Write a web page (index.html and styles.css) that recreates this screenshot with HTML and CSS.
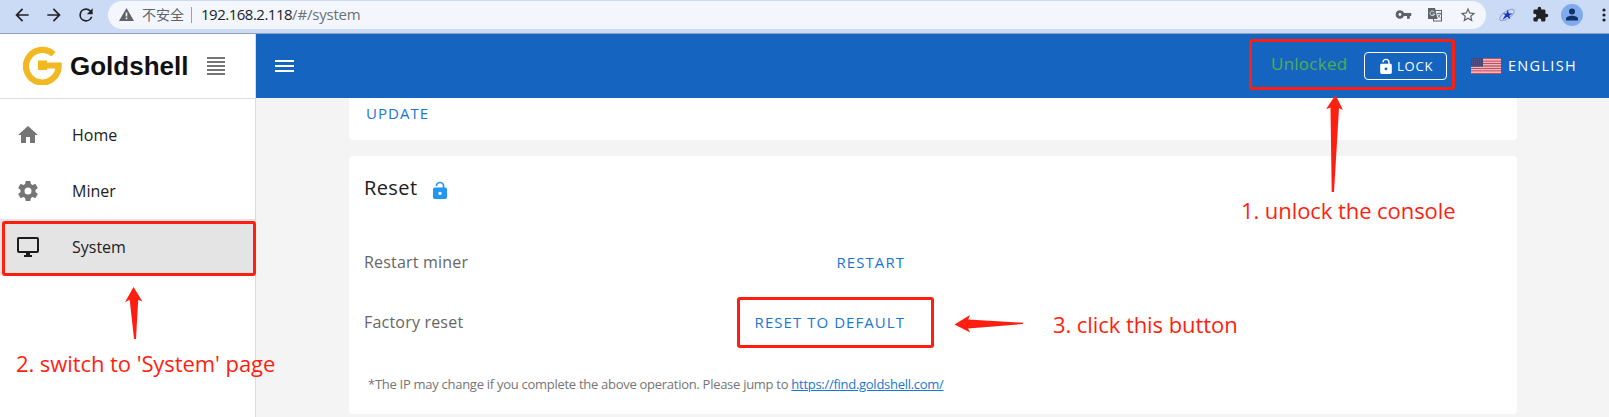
FILE: index.html
```html
<!DOCTYPE html>
<html lang="en">
<head>
<meta charset="utf-8">
<title>Goldshell</title>
<link rel="stylesheet" href="styles.css">
</head>
<body>
<div class="browser-bar">
  <svg class="nav-icon" viewBox="0 0 24 24"><path d="M20 11H7.800l5.600-5.600L12 4l-8 8 8 8 1.400-1.400L7.800 13H20z"/></svg>
  <svg class="nav-icon" viewBox="0 0 24 24"><path d="M12 4l-1.400 1.400L16.200 11H4v2h12.200l-5.600 5.600L12 20l8-8z"/></svg>
  <svg class="nav-icon" viewBox="0 0 24 24"><path d="M17.650 6.350A7.960 7.960 0 0 0 12 4a8 8 0 1 0 7.730 10h-2.080A6 6 0 1 1 12 6c1.660 0 3.140.69 4.220 1.780L13 11h7V4z"/></svg>
  <div class="omnibox">
    <svg class="warn" viewBox="0 0 15 13"><path d="M7.500 0L15 13H0z" fill="#5f6368"/><path d="M6.700 4.500h1.600v4H6.700zM6.700 9.600h1.600v1.600H6.700z" fill="#f3f7fd"/></svg>
    <span class="insecure">不安全</span>
    <span class="sep"></span>
    <span class="url">192.168.2.118<span class="path">/#/system</span></span>
    <div class="omni-icons">
      <svg width="17" height="17" viewBox="0 0 24 24"><path fill="#5f6368" d="M12.650 10A6 6 0 0 0 7 6a6 6 0 1 0 5.650 8H17v4h4v-4h2v-4H12.650zM7 14a2 2 0 1 1 0-4 2 2 0 0 1 0 4z"/></svg>
      <svg width="16" height="16" viewBox="0 0 16 16"><rect x="6.500" y="3.500" width="8" height="10.500" fill="#f3f7fd" stroke="#5f6368"/><path d="M1 1h7l2.500 11H1z" fill="#5f6368"/><path d="M7.400 5.200A2.300 2.300 0 1 0 7.600 7H5.600" stroke="#e8eef8" fill="none"/><path d="M10 6.500h4M12 5.500v1M13.300 6.500c-.3 2-1.500 3.500-3 4.300M10.600 7.500c.6 1.500 1.800 2.800 3 3.500" stroke="#5f6368" stroke-width=".8" fill="none"/></svg>
      <svg width="18" height="18" viewBox="0 0 24 24"><path fill="#5f6368" d="M22 9.240l-7.190-.62L12 2 9.190 8.630 2 9.240l5.460 4.730L5.820 21 12 17.270 18.180 21l-1.630-7.030zM12 15.400l-3.760 2.270 1-4.280-3.320-2.880 4.380-.38L12 6.100l1.710 4.040 4.380.38-3.320 2.880 1 4.280z"/></svg>
    </div>
  </div>
  <svg class="ext" width="16" height="16" viewBox="0 0 16 16"><ellipse cx="8" cy="8" rx="8.500" ry="3.600" transform="rotate(-35 8 8)" fill="none" stroke="#8fa2dc"/><path fill="#1535b8" d="M8.800 2.600l1 3.800 4 .1-3.500 2 1 3.700-3-2.400-5 3.300 3-5.100-2.600-1.500 3.800-.1z"/></svg>
  <svg class="puzzle" width="17" height="17" viewBox="0 0 24 24"><path fill="#202124" d="M20.500 11H19V7a2 2 0 0 0-2-2h-4V3.500a2.500 2.500 0 0 0-5 0V5H4a2 2 0 0 0-2 2v3.800h1.500a2.700 2.700 0 0 1 0 5.400H2V20a2 2 0 0 0 2 2h3.800v-1.500a2.700 2.700 0 0 1 5.400 0V22H17a2 2 0 0 0 2-2v-4h1.500a2.500 2.500 0 0 0 0-5z"/></svg>
  <svg class="avatar" width="22" height="22" viewBox="0 0 22 22"><circle cx="11" cy="11" r="11" fill="#7faaec"/><circle cx="11" cy="7.500" r="3" fill="#123168"/><path d="M5 16.500v-1.700c0-4 12-4 12 0v1.700z" fill="#123168"/></svg>
  <svg class="dots" width="4" height="14" viewBox="0 0 4 14"><circle cx="2" cy="2" r="1.600"/><circle cx="2" cy="7" r="1.600"/><circle cx="2" cy="12" r="1.600"/></svg>
</div>

<div class="app">
  <aside class="sidebar">
    <div class="brand">
      <svg class="logo" width="39" height="39" viewBox="0 0 39 39"><path d="M30.500 8.300A16.300 16.300 0 1 0 35.600 19.500H16" fill="none" stroke="#f2b822" stroke-width="6.200"/><path d="M15 14.500h9v9.500H15z" fill="#f2b822"/></svg>
      <span class="brand-name">Goldshell</span>
      <svg class="justify" width="18" height="18" viewBox="0 0 18 18"><path fill="#757575" d="M0 0h18v2H0zM0 4h18v2H0zM0 8h18v2H0zM0 12h18v2H0zM0 16h18v2H0z"/></svg>
    </div>
    <nav class="menu">
      <a class="item"><svg class="item-icon" viewBox="0 0 24 24"><path d="M10 20v-6h4v6h5v-8h3L12 3 2 12h3v8z"/></svg><span>Home</span></a>
      <a class="item"><svg class="item-icon" viewBox="0 0 24 24"><path d="M12 15.500A3.500 3.500 0 0 1 8.500 12 3.500 3.500 0 0 1 12 8.500a3.500 3.500 0 0 1 3.500 3.500 3.500 3.500 0 0 1-3.500 3.500m7.430-2.530c.04-.32.070-.64.070-.97s-.03-.66-.07-1l2.110-1.630c.19-.15.240-.42.120-.64l-2-3.460c-.12-.22-.39-.31-.61-.22l-2.490 1c-.52-.39-1.060-.73-1.690-.98l-.37-2.650A.506.506 0 0 0 14 2h-4c-.25 0-.46.180-.5.420l-.37 2.650c-.63.250-1.170.590-1.690.980l-2.490-1c-.22-.09-.49 0-.61.220l-2 3.460c-.13.220-.07.490.12.640L4.570 11c-.04.340-.07.670-.07 1s.03.650.07.970l-2.110 1.660c-.19.150-.25.420-.12.640l2 3.460c.12.220.39.300.61.220l2.490-1.010c.52.400 1.060.74 1.690.99l.37 2.650c.04.240.25.420.5.420h4c.25 0 .46-.18.500-.42l.37-2.650c.63-.26 1.170-.59 1.690-.99l2.490 1.010c.22.080.49 0 .61-.22l2-3.460c.12-.22.070-.49-.12-.64z"/></svg><span>Miner</span></a>
      <a class="item active"><svg class="item-icon" viewBox="0 0 24 24"><path d="M21 16H3V4h18m0-2H3c-1.110 0-2 .89-2 2v12a2 2 0 0 0 2 2h7v2H8v2h8v-2h-2v-2h7a2 2 0 0 0 2-2V4a2 2 0 0 0-2-2z"/></svg><span>System</span></a>
    </nav>
  </aside>

  <div class="main">
    <header class="topbar">
      <svg class="burger" width="19" height="12" viewBox="0 0 19 12"><path fill="#fff" d="M0 0h19v2H0zM0 5h19v2H0zM0 10h19v2H0z"/></svg>
      <span class="status">Unlocked</span>
      <button class="lock-btn"><svg class="lock-icon" width="12" height="16" viewBox="4 0 16 22"><path fill="#fff" d="M18 8h-1V6A5 5 0 0 0 7 6h1.900a3.100 3.100 0 0 1 6.200 0v2H6a2 2 0 0 0-2 2v10a2 2 0 0 0 2 2h12a2 2 0 0 0 2-2V10a2 2 0 0 0-2-2zm-6 9a2 2 0 1 1 0-4 2 2 0 0 1 0 4z"/></svg><span>LOCK</span></button>
      <svg class="flag" width="30" height="16" viewBox="0 0 30 16"><path fill="#f3e1e4" d="M0 0h30v16H0z"/><path stroke="#cc4a5c" stroke-width="1.400" d="M0 .6h30M0 3.100h30M0 5.500h30M0 8h30M0 10.500h30M0 12.900h30M0 15.400h30"/><path fill="#46467f" d="M0 0h12v8.600H0z"/><path stroke="#77779f" stroke-width=".6" stroke-dasharray=".7 1.300" d="M1 1.500h10M1 3.300h10M1 5.100h10M1 6.900h10"/></svg>
      <span class="lang">ENGLISH</span>
    </header>
    <section class="content">
      <div class="card card-update"><a class="action update">UPDATE</a></div>
      <div class="card card-reset">
        <h2 class="title"><span>Reset</span><svg width="14" height="18" viewBox="4 0 16 22" preserveAspectRatio="none"><path fill="#2196f3" d="M18 8h-1V6A5 5 0 0 0 7 6h1.900a3.100 3.100 0 0 1 6.200 0v2H6a2 2 0 0 0-2 2v10a2 2 0 0 0 2 2h12a2 2 0 0 0 2-2V10a2 2 0 0 0-2-2zm-6 9a2 2 0 1 1 0-4 2 2 0 0 1 0 4z"/></svg></h2>
        <div class="row"><span class="label">Restart miner</span><a class="action">RESTART</a></div>
        <div class="row"><span class="label">Factory reset</span><a class="action">RESET TO DEFAULT</a></div>
        <p class="note">*The IP may change if you complete the above operation. Please jump to <a class="link">https://find.goldshell.com/</a></p>
      </div>
    </section>
  </div>
</div>

<div class="mark mark-lock"></div>
<div class="mark mark-system"></div>
<div class="mark mark-default"></div>
<svg class="arrows" width="1609" height="417" viewBox="0 0 1609 417">
  <path d="M1335.500 95L1343 110l-4-2-5 84h-2.300L1330.500 107.500l-4.500 1.800z"/>
  <path d="M133.500 287L142.500 301.500l-4.300-1.800L136 339h-2L129.700 299.700l-4.700 2.500z"/>
  <path d="M954.500 324.500L970 315l-1.800 4.500L1023 322.700v1.300L968 328.500l2.200 4z"/>
</svg>
<div class="step step-1">1. unlock the console</div>
<div class="step step-2">2. switch to 'System' page</div>
<div class="step step-3">3. click this button</div>
</body>
</html>
```
FILE: styles.css
```css
* { box-sizing: border-box; }
body {
  margin: 0;
  width: 1609px;
  height: 417px;
  overflow: hidden;
  position: relative;
  font-family: "Open Sans", "Noto Sans", "Noto Sans CJK SC", sans-serif;
  font-size: 16px;
  color: #212121;
  background: #f4f4f4;
}
svg { display: block; flex: none; }

.browser-bar {
  height: 34px;
  display: flex;
  align-items: center;
  padding: 0 0 4px 12px;
  background: #cbdbf6;
  border-bottom: 1px solid #8f9fbd;
}
.nav-icon { width: 20px; height: 20px; margin-right: 12px; fill: #202124; }
.omnibox {
  width: 1378px;
  height: 28px;
  padding-left: 11px;
  border-radius: 14px;
  background: #f3f7fd;
  display: flex;
  align-items: center;
  white-space: nowrap;
}
.warn { width: 15px; height: 13px; }
.insecure { margin-left: 8px; font: 14px "Noto Sans CJK SC", sans-serif; color: #5f6368; width: 42px; margin-top: -2px; }
.sep { width: 1px; height: 16px; margin: 0 9px 0 7px; background: #9aa0a6; }
.url { font-size: 15px; letter-spacing: -0.5px; color: #202124; margin-top: -1px; }
.path { color: #6b7075; letter-spacing: -0.2px; }
.omni-icons { margin-left: auto; display: flex; align-items: center; gap: 15px; padding-right: 9px; }
.omni-icons svg:nth-child(2) { margin-right: 1px; }
.ext { margin-left: 13px; }
.puzzle { margin-left: 17px; }
.avatar { margin-left: 12px; }
.dots { margin-left: 19px; fill: #202124; }

.app { display: flex; height: 383px; }
.sidebar { width: 256px; background: #fff; border-right: 1px solid #dcdcdc; }
.brand {
  height: 65px;
  display: flex;
  align-items: center;
  padding-left: 23px;
  border-bottom: 1px solid #dcdcdc;
}
.logo { margin-top: -2px; }
.brand-name {
  width: 119px;
  margin: 1px 18px 0 8px;
  font: bold 26px "Liberation Sans", Arial, sans-serif;
  color: #111;
}
.menu { padding-top: 8px; }
.item { display: flex; align-items: center; height: 56px; padding: 0 0 0 16px; }
.item-icon { width: 24px; height: 24px; margin: -1px 32px 0 0; fill: #757575; }
.active { background: #e4e4e4; }
.active .item-icon { fill: #1c1c1c; }

.main { flex: 1; }
.topbar { height: 64px; display: flex; align-items: center; padding-left: 19px; background: #1565c0; color: #fff; }
.status { margin: -6px 0 0 977px; width: 93px; font-size: 17px; color: #4caf50; letter-spacing: 0.25px; }
.lock-btn {
  width: 83px;
  height: 28px;
  display: flex;
  align-items: center;
  padding: 0 0 0 15px;
  border: 1px solid #fff;
  border-radius: 4px;
  background: none;
  color: #fff;
  font: 13px "Open Sans", sans-serif;
  letter-spacing: 0.8px;
}
.lock-icon { margin-right: 5px; }
.flag { margin-left: 24px; }
.lang { margin: -1px 0 0 7px; font-size: 14.500px; letter-spacing: 1.300px; }

.content { padding-left: 93px; }
.card { width: 1168px; background: #fff; }
.card-update { height: 42px; padding: 4px 17px; border-radius: 0 0 4px 4px; }
.card-reset { height: 258px; margin-top: 16px; padding: 0 15px; border-radius: 4px; }
.action { color: #1976d2; font-size: 15px; letter-spacing: 1.050px; white-space: nowrap; }
.title { display: flex; align-items: center; height: 64px; margin: 0 0 12px; font-size: 20px; font-weight: 400; }
.title span { width: 69px; letter-spacing: 0.4px; margin-top: -1px; }
.title svg { margin-top: 4px; }
.row { display: flex; align-items: center; justify-content: space-between; width: 541px; height: 60px; padding-bottom: 1px; }
.label { color: #666; letter-spacing: 0.2px; }
.note { margin: 23px 0 0 4px; font-size: 13px; line-height: 18px; letter-spacing: -0.28px; color: #757575; white-space: nowrap; }
.link { color: #1976d2; text-decoration: underline; }

.mark { position: absolute; border: 3px solid #ff1e10; border-radius: 3px; }
.mark-lock { left: 1249px; top: 39px; width: 206px; height: 51px; }
.mark-system { left: 2px; top: 221px; width: 254px; height: 55px; }
.mark-default { left: 737px; top: 297px; width: 197px; height: 51px; }
.arrows { position: absolute; left: 0; top: 0; fill: #ff1e10; }
.step { position: absolute; font-size: 22px; line-height: 30px; letter-spacing: -0.07px; color: #ff1e10; white-space: nowrap; }
.step-1 { left: 1241px; top: 195px; }
.step-2 { left: 16px; top: 348px; }
.step-3 { left: 1053px; top: 309px; }
```
